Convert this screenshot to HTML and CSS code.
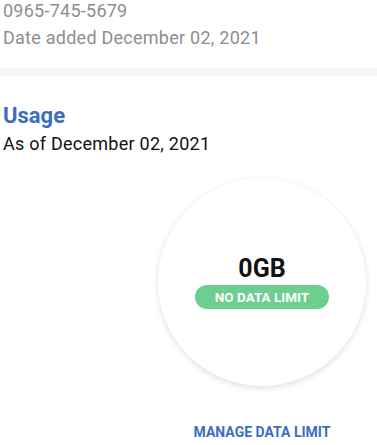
FILE: index.html
```html
<!DOCTYPE html>
<html lang="en">
<head>
    <meta charset="UTF-8">
    <meta name="viewport" content="width=device-width, initial-scale=1.0">
    <title>Usage</title>
    <link rel="stylesheet" href="styles.css">
</head>
<body>
    <div class="contact">
        <div>0965-745-5679</div>
        <div>Date added December 02, 2021</div>
    </div>

    <div class="divider"></div>

    <div class="usage">
        <h2>Usage</h2>
        <div class="as-of">As of December 02, 2021</div>
    </div>

    <div class="meter-row">
        <div class="meter-col">
            <div class="meter">
                <div class="amount">0GB</div>
                <div class="pill">NO DATA LIMIT</div>
            </div>
            <a href="#" class="manage">MANAGE DATA LIMIT</a>
        </div>
    </div>
</body>
</html>
```

FILE: styles.css
```css
body {
    font-family: Roboto, "Liberation Sans", Arial, sans-serif;
    margin: 0;
    padding: 0;
    background-color: white;
}

.contact {
    margin-top: -3px;
    padding-left: 3px;
    font-size: 18px;
    line-height: 27px;
    letter-spacing: 0.25px;
    color: #8e8e8e;
}

.divider {
    margin-top: 17px;
    height: 8px;
    background-color: #f7f7f7;
}

.usage {
    padding-left: 3px;
}

.usage h2 {
    margin: 27px 0 0 0;
    font-size: 22px;
    line-height: 26px;
    font-weight: bold;
    color: #3d6dbf;
}

.as-of {
    margin-top: 2px;
    font-size: 18px;
    line-height: 26px;
    letter-spacing: 0.25px;
    color: #111;
}

.meter-row {
    display: flex;
    justify-content: flex-end;
    padding-right: 11px;
    margin-top: 21px;
}

.meter-col {
    display: flex;
    flex-direction: column;
    align-items: center;
}

.meter {
    width: 208px;
    height: 208px;
    border-radius: 50%;
    background-color: white;
    box-shadow: 0 2px 6px rgba(0, 0, 0, 0.13);
    display: flex;
    flex-direction: column;
    align-items: center;
    justify-content: center;
    gap: 2px;
}

.amount {
    font-size: 25px;
    line-height: 28px;
    font-weight: bold;
    color: #111;
}

.pill {
    width: 134px;
    height: 24px;
    border-radius: 12px;
    background-color: #6ccf8f;
    color: white;
    font-size: 13.5px;
    font-weight: bold;
    line-height: 24px;
    text-align: center;
}

.manage {
    margin-top: 38px;
    font-size: 14px;
    line-height: 16px;
    font-weight: bold;
    color: #3d6dbf;
    text-decoration: none;
}
```
